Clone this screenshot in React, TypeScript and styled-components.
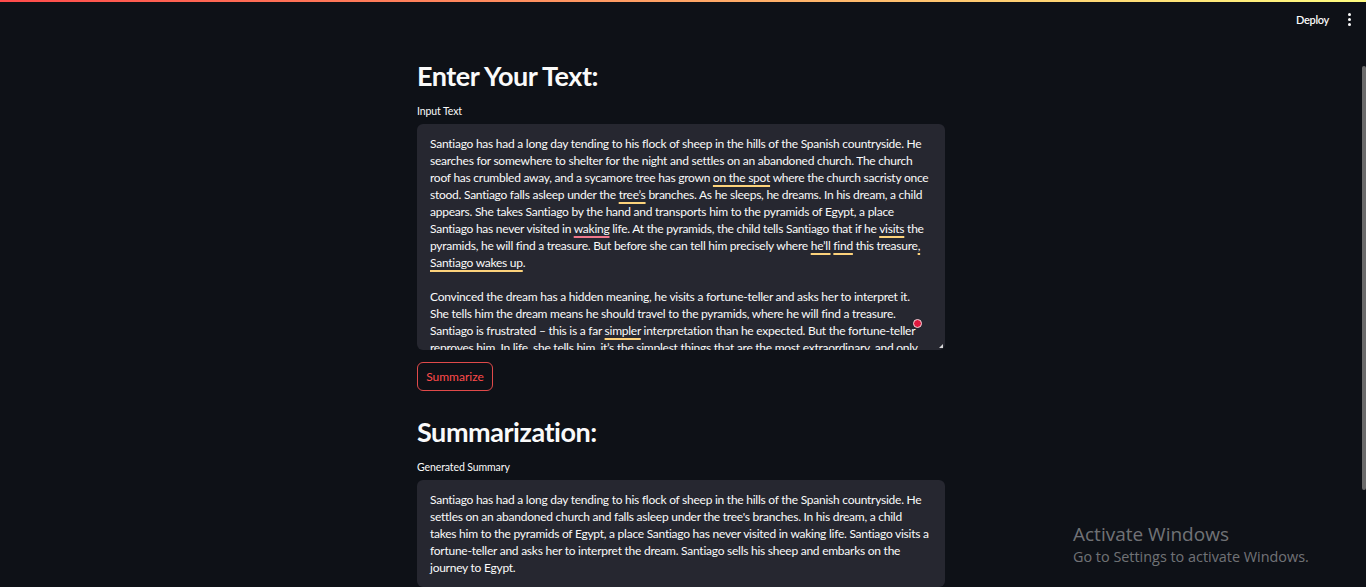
import React from 'react';
import styled, { createGlobalStyle } from 'styled-components';

const GlobalStyle = createGlobalStyle`
  html, body {
    margin: 0;
    padding: 0;
    background: #0e1117;
    overflow: hidden;
  }
  body {
    font-family: Lato, "Noto Sans", sans-serif;
    color: #fafafa;
  }
`;

const Decoration = styled.div`
  height: 2px;
  background: linear-gradient(90deg, #ff4b4b, #fffd80);
`;

const Header = styled.header`
  height: 34px;
  display: flex;
  align-items: center;
  justify-content: flex-end;
  gap: 18px;
  padding-right: 15px;
`;

const DeployButton = styled.button`
  background: none;
  border: none;
  padding: 0;
  color: #fafafa;
  font-family: Lato, sans-serif;
  font-size: 11px;
  font-weight: 600;
  letter-spacing: -0.3px;
  cursor: pointer;
`;

const MenuDots = styled.div`
  width: 4px;
  display: flex;
  flex-direction: column;
  align-items: center;
  gap: 2px;
  span {
    width: 3px;
    height: 3px;
    border-radius: 50%;
    background: #fafafa;
  }
`;

const Body = styled.div`
  display: flex;
  height: calc(100vh - 36px);
`;

const Main = styled.main`
  flex: 1;
  display: flex;
  justify-content: center;
`;

const Column = styled.div`
  width: 528px;
  padding-top: 23px;
  display: flex;
  flex-direction: column;
`;

const Title = styled.h2<{ top?: number }>`
  margin: ${p => p.top ?? 0}px 0 0;
  font-size: 27px;
  line-height: 34px;
  font-weight: 700;
  letter-spacing: -0.45px;
`;

const Label = styled.label`
  display: block;
  margin-top: 11px;
  font-size: 10.5px;
  line-height: 14px;
  letter-spacing: -0.1px;
`;

const TextBox = styled.div<{ height?: number }>`
  position: relative;
  margin-top: 6px;
  background: #262730;
  border-radius: 6px;
  padding: 11px 13px 12px;
  height: ${p => (p.height ? `${p.height}px` : 'auto')};
  box-sizing: border-box;
  overflow: hidden;
  font-size: 12px;
  letter-spacing: -0.25px;
  line-height: 17px;
`;

const Line = styled.div`
  white-space: nowrap;
  min-height: 17px;
`;

const Mark = styled.span<{ tone: 'y' | 'r' }>`
  text-decoration: underline;
  text-decoration-color: ${p => (p.tone === 'y' ? '#fcd27b' : '#f0788c')};
  text-decoration-thickness: 2px;
  text-underline-offset: 3px;
`;

const GrammarDot = styled.span`
  position: absolute;
  right: 23px;
  top: 195px;
  width: 7px;
  height: 7px;
  border-radius: 50%;
  background: #e0193f;
  border: 1px solid #f4d6dc;
`;

const ResizeGrip = styled.span`
  position: absolute;
  right: 2px;
  bottom: 2px;
  width: 0;
  height: 0;
  border-left: 4px solid transparent;
  border-bottom: 4px solid #d8d8d8;
`;

const Button = styled.button`
  align-self: flex-start;
  margin-top: 12px;
  width: 76px;
  height: 29px;
  background: transparent;
  border: 1px solid #e04a4a;
  border-radius: 6px;
  color: #ff4b4b;
  font-family: Lato, sans-serif;
  font-size: 12px;
`;

const ScrollTrack = styled.div`
  width: 4px;
  padding-top: 30px;
`;

const ScrollThumb = styled.div`
  height: 424px;
  background: #6b6b6b;
  border-radius: 2px;
`;

const Watermark = styled.div`
  position: absolute;
  left: 1073px;
  top: 525px;
  font-family: "Open Sans", "Noto Sans", sans-serif;
  color: rgba(255, 255, 255, 0.42);
  line-height: 1;
`;

const WatermarkTitle = styled.div`
  font-size: 19px;
`;

const WatermarkSub = styled.div`
  margin-top: 6px;
  font-size: 14.4px;
`;

const inputLines = [
  'Santiago has had a long day tending to his flock of sheep in the hills of the Spanish countryside. He',
  'searches for somewhere to shelter for the night and settles on an abandoned church. The church',
  'roof has crumbled away, and a sycamore tree has grown [y|on the spot] where the church sacristy once',
  'stood. Santiago falls asleep under the [y|tree’s] branches. As he sleeps, he dreams. In his dream, a child',
  'appears. She takes Santiago by the hand and transports him to the pyramids of Egypt, a place',
  'Santiago has never visited in [r|waking] life. At the pyramids, the child tells Santiago that if he [y|visits] the',
  'pyramids, he will find a treasure. But before she can tell him precisely where [y|he’ll] [y|find] this treasure[y|,]',
  '[y|Santiago wakes up].',
  '',
  'Convinced the dream has a hidden meaning, he visits a fortune-teller and asks her to interpret it.',
  'She tells him the dream means he should travel to the pyramids, where he will find a treasure.',
  'Santiago is frustrated – this is a far [y|simpler] interpretation than he expected. But the fortune-teller',
  'reproves him. In life, she tells him, it’s the simplest things that are the most extraordinary, and only',
];

const summaryLines = [
  'Santiago has had a long day tending to his flock of sheep in the hills of the Spanish countryside. He',
  "settles on an abandoned church and falls asleep under the tree's branches. In his dream, a child",
  'takes him to the pyramids of Egypt, a place Santiago has never visited in waking life. Santiago visits a',
  'fortune-teller and asks her to interpret the dream. Santiago sells his sheep and embarks on the',
  'journey to Egypt.',
];

// "[y|word]" marks a yellow underline, "[r|word]" a red one
const renderLine = (text: string) => {
  const parts: React.ReactNode[] = [];
  const re = /\[(y|r)\|([^\]]+)\]/g;
  let last = 0;
  let m: RegExpExecArray | null;
  while ((m = re.exec(text))) {
    if (m.index > last) parts.push(text.slice(last, m.index));
    parts.push(
      <Mark key={m.index} tone={m[1] as 'y' | 'r'}>
        {m[2]}
      </Mark>
    );
    last = m.index + m[0].length;
  }
  parts.push(text.slice(last));
  return parts;
};

export default function App() {
  return (
    <>
      <GlobalStyle />
      <Decoration />
      <Header>
        <DeployButton>Deploy</DeployButton>
        <MenuDots>
          <span />
          <span />
          <span />
        </MenuDots>
      </Header>
      <Body>
        <Main>
          <Column>
            <Title>Enter Your Text:</Title>
            <Label>Input Text</Label>
            <TextBox height={228}>
              {inputLines.map((l, i) => (
                <Line key={i}>{renderLine(l)}</Line>
              ))}
              <GrammarDot />
              <ResizeGrip />
            </TextBox>
            <Button>Summarize</Button>
            <Title top={24}>Summarization:</Title>
            <Label>Generated Summary</Label>
            <TextBox>
              {summaryLines.map((l, i) => (
                <Line key={i}>{l}</Line>
              ))}
            </TextBox>
          </Column>
        </Main>
        <ScrollTrack>
          <ScrollThumb />
        </ScrollTrack>
      </Body>
      <Watermark>
        <WatermarkTitle>Activate Windows</WatermarkTitle>
        <WatermarkSub>Go to Settings to activate Windows.</WatermarkSub>
      </Watermark>
    </>
  );
}
